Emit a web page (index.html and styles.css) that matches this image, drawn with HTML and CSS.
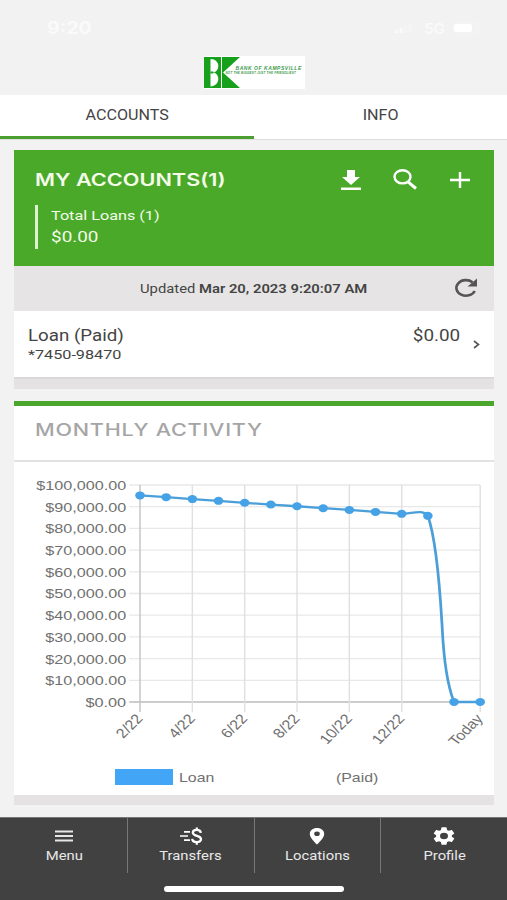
FILE: index.html
```html
<!DOCTYPE html>
<html lang="en">
<head>
    <meta charset="UTF-8">
    <meta name="viewport" content="width=device-width, initial-scale=1.0">
    <title>My Accounts</title>
    <link rel="stylesheet" href="styles.css">
</head>
<body>
    <div class="app">
        <header class="header">
            <div class="status">
                <span class="time">9:20</span>
                <div class="signal">
                    <svg width="22" height="10" viewBox="0 0 22 10"><path d="M0 7h3v3H0zM4.500 5h3v5h-3z" fill="#fafafa"/><path d="M9 3h3v7H9zM13.500 1h3v9h-3z" fill="#f5f5f5"/></svg>
                    <span class="network">5G</span>
                    <svg width="29" height="12" viewBox="0 0 29 12"><rect x="1" y="1" width="25" height="10" rx="3" fill="none" stroke="#f5f5f5"/><rect x="2" y="2" width="18" height="8" rx="2" fill="#fff"/></svg>
                </div>
            </div>
            <div class="logo">
                <svg width="36" height="31" viewBox="0 0 36 31">
                    <path d="M0 0h17v31H0z" fill="#16a01c"/>
                    <path d="M6.500 2c10 0 10 12.500 2.500 13.500C16.500 16.500 16.500 29 6.500 29.500z" fill="#fff"/>
                    <path d="M6.500 14.500h3v2h-3z" fill="#16a01c"/>
                    <path d="M18 0h18L19 15.500 36 31H18z" fill="#16a01c"/>
                </svg>
                <div class="logo-text">
                    <span class="logo-name">BANK OF KAMPSVILLE</span>
                    <span class="logo-tag">NOT THE BIGGEST JUST THE FRIENDLIEST</span>
                </div>
            </div>
        </header>

        <nav class="tabs">
            <a class="tab active"><span class="w-tab">ACCOUNTS</span></a>
            <a class="tab"><span class="w-tab">INFO</span></a>
        </nav>

        <main class="content">
            <section class="card">
                <div class="summary">
                    <div class="summary-top">
                        <h1 class="title">MY ACCOUNTS(1)</h1>
                        <div class="actions">
                            <svg width="20" height="20" viewBox="0 0 20 20" fill="#fff"><path d="M6 0h8v7h5l-9 8-9-8h5zM0 17.500h20V20H0z"/></svg>
                            <svg width="25" height="22" viewBox="0 0 25 22" fill="none" stroke="#fff"><ellipse cx="9.500" cy="7.800" rx="8" ry="6.600" stroke-width="2.400"/><path d="M15 12.800l8 6.700" stroke-width="3"/></svg>
                            <svg width="20" height="18" viewBox="0 0 20 18"><path d="M0 9h20M10 1v16" stroke="#fff" stroke-width="2.400"/></svg>
                        </div>
                    </div>
                    <div class="total">
                        <span class="total-label">Total Loans (1)</span>
                        <span class="total-value">$0.00</span>
                    </div>
                </div>
                <div class="updated">
                    <span class="updated-text">Updated <b>Mar 20, 2023 9:20:07 AM</b></span>
                    <svg class="refresh" width="24" height="20" viewBox="0 0 24 20"><path d="M18.500 4.200A9.600 7.800 0 1 0 20.800 13" fill="none" stroke="#555" stroke-width="2.600"/><path d="M23 0.500v8h-9.500z" fill="#555"/></svg>
                </div>
                <div class="account">
                    <div class="account-info">
                        <span class="account-name">Loan (Paid)</span>
                        <span class="account-number">*7450-98470</span>
                    </div>
                    <span class="account-balance">$0.00</span>
                    <svg class="chevron" width="7" height="9" viewBox="0 0 7 9"><path d="M1 1l4.500 3.500L1 8" fill="none" stroke="#555" stroke-width="1.600"/></svg>
                </div>
                <div class="card-foot"></div>
            </section>

            <section class="card activity">
                <h2 class="activity-title"><span>MONTHLY ACTIVITY</span></h2>
                <svg class="chart" id="chart" viewBox="0 0 400 306" preserveAspectRatio="none"></svg>
                <div class="legend">
                    <span class="swatch"></span>
                    <span class="legend-text">Loan</span>
                    <span class="legend-text paid">(Paid)</span>
                </div>
                <div class="card-foot short"></div>
            </section>
        </main>

        <footer class="bottom">
            <div class="menu">
                <a class="item">
                    <svg width="20" height="18" viewBox="0 0 20 18"><path d="M1 4.500h18M1 9h18M1 13.500h18" stroke="#e6e6e6" stroke-width="1.900"/></svg>
                    <span>Menu</span>
                </a>
                <a class="item">
                    <svg width="24" height="18" viewBox="0 0 24 18" fill="none" stroke="#fff"><path d="M5 4.800h6M1 9h8M5 13.200h6" stroke-width="1.700"/><path d="M21.800 5.800C21.500 1.700 13.800 1.900 13.800 5.600c0 4.300 8.200 2.400 8.200 6.700 0 3.800-8.500 3.700-8.800-.5M17.800 0.500v3M17.800 14.800v3" stroke-width="2.300"/></svg>
                    <span>Transfers</span>
                </a>
                <a class="item">
                    <svg width="16" height="18" viewBox="0 0 16 18"><path d="M8 1C3.800 1 .8 3.600.8 6.900.8 11 8 17.500 8 17.500s7.200-6.500 7.200-10.600C15.200 3.600 12.200 1 8 1zm0 8a2.800 2.300 0 1 1 0-4.600A2.800 2.300 0 0 1 8 9z" fill="#fff" fill-rule="evenodd"/></svg>
                    <span>Locations</span>
                </a>
                <a class="item">
                    <svg width="22" height="18" viewBox="2 2 20 20" preserveAspectRatio="none"><path d="M19.140 12.940c.04-.3.060-.61.060-.94 0-.32-.02-.64-.07-.94l2.030-1.580a.49.49 0 0 0 .12-.61l-1.920-3.320a.49.49 0 0 0-.59-.22l-2.390.96c-.5-.38-1.030-.7-1.620-.94L14.400 2.810a.48.48 0 0 0-.48-.41h-3.840a.47.47 0 0 0-.47.41L9.250 5.350c-.59.24-1.130.57-1.620.94l-2.390-.96a.48.48 0 0 0-.59.22L2.740 8.870a.47.47 0 0 0 .12.61l2.030 1.580c-.05.3-.09.63-.09.94s.02.64.07.94l-2.030 1.580a.49.49 0 0 0-.12.61l1.920 3.320c.12.22.37.29.59.22l2.390-.96c.5.38 1.030.7 1.620.94l.36 2.540c.05.24.24.41.48.41h3.840c.24 0 .44-.17.47-.41l.36-2.540c.59-.24 1.130-.56 1.620-.94l2.390.96c.22.080.47 0 .59-.22l1.920-3.320a.47.47 0 0 0-.12-.61zM12 15.600A3.600 3.600 0 1 1 12 8.400a3.600 3.600 0 0 1 0 7.200z" fill="#fff"/></svg>
                    <span>Profile</span>
                </a>
            </div>
            <div class="home-bar"></div>
        </footer>
    </div>

    <script src="chart.js"></script>
</body>
</html>
```

FILE: styles.css
```css
* {
    box-sizing: border-box;
}
body {
    margin: 0;
    font-family: Roboto, sans-serif;
    color: #444;
    background: #f2f2f2;
}
.app {
    width: 507px;
    height: 900px;
    display: flex;
    flex-direction: column;
    overflow: hidden;
}
.header {
    height: 95px;
    display: flex;
    flex-direction: column;
    align-items: center;
}
.status {
    width: 100%;
    height: 56px;
    padding: 0 26px 0 47px;
    display: flex;
    justify-content: space-between;
    align-items: center;
    color: #fafafa;
    font: bold 17px Inter, sans-serif;
}
.time {
    transform: scaleX(1.15);
    transform-origin: left;
}
.signal {
    display: flex;
    align-items: center;
    gap: 7px;
}
.network {
    font-size: 15px;
    font-weight: 600;
}
.logo {
    width: 101px;
    height: 33px;
    margin-left: 1px;
    display: flex;
    align-items: center;
    background: #fff;
}
.logo svg {
    flex: none;
}
.logo-text {
    width: 65px;
    display: flex;
    flex-direction: column;
    margin: -5px 0 0 -4px;
    color: #3d9a4a;
    white-space: nowrap;
}
.logo-name {
    font: italic bold 5px/6px "Liberation Sans", sans-serif;
    letter-spacing: 0.55px;
}
.logo-tag {
    font: italic bold 3px/5px "Liberation Sans", sans-serif;
    margin-left: -10px;
    letter-spacing: 0.2px;
}
.tabs {
    height: 45px;
    display: flex;
    background: #fff;
    border-bottom: 1px solid #dedede;
}
.tab {
    flex: 1;
    height: 44px;
    padding-top: 11px;
    text-align: center;
    font-size: 14px;
    line-height: 18px;
}
.tab.active {
    border-bottom: 3px solid #4b9f30;
}
.w-tab {
    display: inline-block;
    transform: scaleX(1.15);
}
.content {
    flex: 1;
    padding: 10px 13px 0 14px;
}
.card {
    background: #fff;
}
.summary {
    height: 116px;
    padding: 17px 24px 0 21px;
    background: #4aa929;
    color: #f4fbe9;
}
.summary-top {
    height: 25px;
    display: flex;
    justify-content: space-between;
    align-items: center;
}
.title {
    margin: 0;
    font: 600 17px Inter, sans-serif;
    transform: scaleX(1.275);
    transform-origin: left;
}
.actions {
    display: flex;
    align-items: center;
    gap: 32px;
}
.total {
    height: 44px;
    margin-top: 13px;
    padding-left: 13px;
    border-left: 3px solid #dff3d3;
    display: flex;
    flex-direction: column;
    align-items: flex-start;
}
.total-label {
    font-size: 13.500px;
    line-height: 21px;
    transform: scaleX(1.2);
    transform-origin: left;
}
.total-value {
    font-size: 15.500px;
    line-height: 22px;
    transform: scaleX(1.22);
    transform-origin: left;
}
.updated {
    height: 45px;
    padding: 0 16px 0 126px;
    display: flex;
    align-items: center;
    justify-content: space-between;
    background: #e6e4e5;
    font-size: 13px;
}
.updated-text {
    white-space: nowrap;
    transform: scaleX(1.138);
    transform-origin: left;
}
.updated b {
    font-weight: 600;
}
.refresh {
    margin-top: -2px;
}
.account {
    height: 66px;
    padding: 15px 14px 0;
    display: flex;
}
.account-info {
    flex: 1;
    display: flex;
    flex-direction: column;
    align-items: flex-start;
}
.account-name {
    font-size: 16px;
    line-height: 20px;
    transform: scaleX(1.17);
    transform-origin: left;
}
.account-number {
    font-size: 13.500px;
    line-height: 16px;
    transform: scaleX(1.2);
    transform-origin: left;
}
.account-balance {
    font-size: 16px;
    line-height: 20px;
    transform: scaleX(1.18);
    transform-origin: right;
}
.chevron {
    margin: 14px 0 0 13px;
}
.card-foot {
    height: 12px;
    background: #e4e2e3;
    border-top: 2px solid #dad8d9;
}
.card-foot.short {
    height: 10px;
    border-top: none;
}
.activity {
    margin-top: 12px;
    border-top: 5px solid #4aa62c;
}
.activity-title {
    height: 56px;
    margin: 0;
    padding: 12px 21px;
    border-bottom: 2px solid #e2e2e2;
    color: #a5a5a5;
    font: 500 17px/24px Inter, sans-serif;
}
.activity-title span {
    display: inline-block;
    letter-spacing: 0.6px;
    transform: scaleX(1.27);
    transform-origin: left;
}
.chart {
    display: block;
    width: 480px;
    height: 306px;
}
.axis-label {
    font: 13.500px "Liberation Sans", sans-serif;
    fill: #707070;
}
.legend {
    height: 27px;
    padding: 1px 0 0 101px;
    display: flex;
    align-items: flex-start;
    font: 13px/17px "Liberation Sans", sans-serif;
    color: #707070;
}
.swatch {
    width: 58px;
    height: 16px;
    margin-right: 6px;
    background: #42a5f5;
}
.legend-text {
    transform: scaleX(1.22);
    transform-origin: left;
}
.paid {
    margin-left: 128px;
}
.bottom {
    height: 83px;
    background: #414141;
    border-top: 1px solid #777;
}
.menu {
    height: 55px;
    display: flex;
    padding-left: 1px;
}
.item {
    flex: 1;
    padding-top: 9px;
    display: flex;
    flex-direction: column;
    align-items: center;
    color: #e8e8e8;
    font-size: 13px;
    line-height: 21px;
}
.item + .item {
    border-left: 1px solid #777;
}
.item span {
    transform: scaleX(1.14);
}
.home-bar {
    width: 180px;
    height: 6px;
    margin: 13px auto 0;
    border-radius: 3px;
    background: #fff;
}
```

FILE: chart.js
```js
const chart = document.getElementById("chart");
const left = 105;
const right = 388.5;
const top_ = 23;
const bottom_ = 240;
const step = (right - left) / 13;
const balances = [95200, 94400, 93500, 92700, 91800, 91000, 90200, 89300, 88500, 87600, 86700, 85800, 0, 0];
const months = { 0: "2/22", 2: "4/22", 4: "6/22", 6: "8/22", 8: "10/22", 10: "12/22", 13: "Today" };

function add(name, attrs, text) {
    const el = document.createElementNS("http://www.w3.org/2000/svg", name);
    for (const key in attrs) el.setAttribute(key, attrs[key]);
    if (text) el.textContent = text;
    chart.appendChild(el);
}

function yFor(value) {
    return bottom_ - value / 100000 * (bottom_ - top_);
}

// horizontal grid and dollar labels
for (let v = 0; v <= 100000; v += 10000) {
    const y = yFor(v);
    add("line", { x1: left - 9, x2: right, y1: y, y2: y, stroke: v === 0 ? "#bdbdbd" : "#e8e8e8", "stroke-width": 1.3 });
    const label = "$" + v.toLocaleString("en-US") + ".00";
    add("text", { x: 93.5, y: y + 5, "text-anchor": "end", class: "axis-label", textLength: v === 0 ? 34 : v === 100000 ? 75 : 67.5, lengthAdjust: "spacingAndGlyphs" }, label);
}

// vertical grid and month labels
for (const i in months) {
    const x = left + i * step;
    add("line", { x1: x, x2: x, y1: top_, y2: bottom_ + 10, stroke: i === "0" ? "#c4c4c4" : "#e0e0e0", "stroke-width": 1.2 });
    add("text", { x: 0, y: 0, "text-anchor": "end", class: "axis-label", transform: `translate(${x + 3} ${bottom_ + 17}) rotate(-50)` }, months[i]);
}

// balance line
let path = "";
for (let i = 0; i <= 10; i++) {
    path += (i ? "L" : "M") + (left + i * step) + " " + yFor(balances[i]);
}
path += "C331 52 341 46.500 344.900 54C353 81 355.500 139 356.800 165C358 195 361 223 366.700 240L388.500 240";
add("path", { d: path, fill: "none", stroke: "#4a9fd8", "stroke-width": 2.3 });

balances.forEach((value, i) => {
    add("circle", { cx: left + i * step, cy: yFor(value), r: 4, fill: "#45a2e6" });
});
```
